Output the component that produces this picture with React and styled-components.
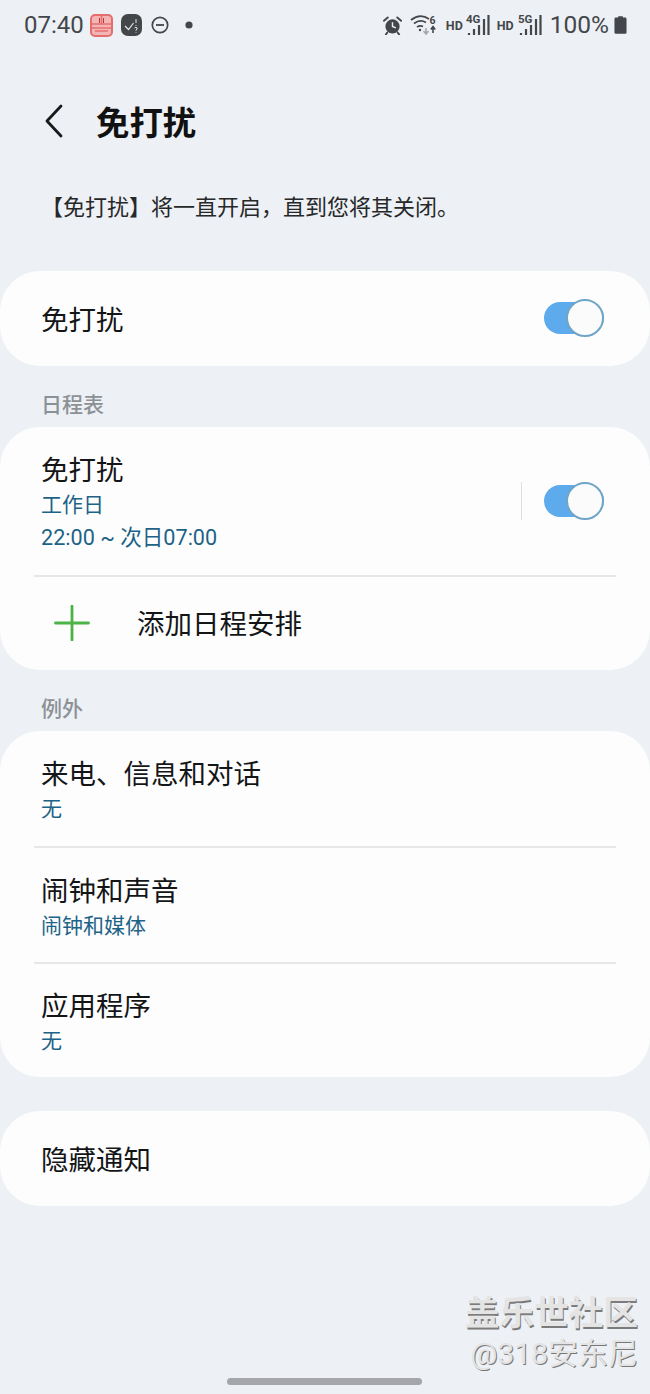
import React from "react";
import styled, { createGlobalStyle } from "styled-components";

const Global = createGlobalStyle`
  html, body { margin: 0; padding: 0; background: #edf0f4; }
  body { font-family: "Noto Sans CJK SC", "Roboto", sans-serif; }
`;

const Page = styled.div`
  position: relative;
  width: 650px;
  height: 1394px;
  overflow: hidden;
  background: #edf0f4;
  display: flex;
  flex-direction: column;
`;

const StatusBar = styled.div`
  height: 50px;
  display: flex;
  align-items: center;
  justify-content: space-between;
  padding: 0 23px 0 24px;
  color: #43474b;
  font-family: Roboto, sans-serif;
`;

const StatusGroup = styled.div`
  display: flex;
  align-items: center;
`;

const Slot = styled.span`
  display: flex;
  margin-left: ${({ $ml }) => $ml || 0}px;
`;

const StatusText = styled.span`
  font-size: ${({ $size }) => $size || 24}px;
  line-height: 30px;
  margin-left: ${({ $ml }) => $ml || 0}px;
`;

const Header = styled.header`
  height: 142px;
  display: flex;
  align-items: center;
  padding-left: 44px;
`;

const Title = styled.h1`
  margin: 0 0 0 32px;
  font-size: 33.4px;
  line-height: 44px;
  font-weight: 700;
  color: #111;
`;

const Intro = styled.p`
  margin: 0;
  height: 79px;
  box-sizing: border-box;
  padding-left: 41px;
  font-size: 22px;
  line-height: 26px;
  color: #26282a;
`;

const Card = styled.section`
  background: #fdfdfd;
  border-radius: 40px;
  display: flex;
  flex-direction: column;
  margin-top: ${({ $mt }) => $mt || 0}px;
`;

const Row = styled.div`
  height: ${({ $h }) => $h}px;
  box-sizing: border-box;
  display: flex;
  align-items: center;
  padding: 0 46px ${({ $pb }) => $pb || 0}px 41px;
`;

const Divider = styled.div`
  height: 2px;
  margin: 0 34px;
  background: #e6e7e9;
`;

const RowBody = styled.div`
  flex: 1;
  display: flex;
  flex-direction: column;
`;

const Label = styled.div`
  font-size: 27.5px;
  line-height: 38px;
  color: #141517;
`;

const Sub = styled.div`
  font-size: 21px;
  line-height: 33px;
  color: #1c6387;
`;

const Time = styled(Sub)`
  font-family: Roboto, "Noto Sans CJK SC", sans-serif;
  font-size: 21.6px;
  margin-top: 1px;
`;

const SectionLabel = styled.div`
  height: 61px;
  box-sizing: border-box;
  padding: 19px 0 0 41px;
  font-size: 21px;
  line-height: 36px;
  font-weight: 500;
  color: #8c9196;
`;

const Toggle = styled.div`
  position: relative;
  width: 60px;
  height: 32px;
  background: #5dabec;
  border-radius: 16px;
`;

const Thumb = styled.div`
  position: absolute;
  right: 0;
  top: -3px;
  width: 38px;
  height: 38px;
  box-sizing: border-box;
  border-radius: 50%;
  background: #fbfbfb;
  border: 2px solid #6fa5c6;
`;

const VRule = styled.div`
  width: 1px;
  height: 38px;
  background: #dcdee0;
  margin-right: 22px;
`;

const PlusSlot = styled.div`
  display: flex;
  margin: -2px 0 0 13px;
`;

const AddLabel = styled(Label)`
  margin: -3px 0 0 47px;
`;

const Watermark = styled.div`
  position: absolute;
  right: 12px;
  top: 1288px;
  text-align: right;
  color: #e4e4e4;
`;

const WmTitle = styled.div`
  font-size: 34.6px;
  line-height: 44px;
  font-weight: 700;
  text-shadow: 1px 2px 0 #7b7b7b;
`;

const WmSub = styled.div`
  font-size: 30px;
  line-height: 44px;
  font-family: Roboto, "Noto Sans CJK SC", sans-serif;
  text-shadow: 1px 1px 0 #777;
`;

const HomeBar = styled.div`
  position: absolute;
  left: 227px;
  top: 1378px;
  width: 195px;
  height: 7px;
  border-radius: 4px;
  background: #a4a6a9;
`;

const HdText = styled.span`
  font-size: 12.5px;
  font-weight: 700;
  margin-left: ${({ $ml }) => $ml || 0}px;
  margin-top: 1px;
`;

const SwitchOn = () => (
  <Toggle>
    <Thumb />
  </Toggle>
);

const Chevron = () => (
  <svg width="20" height="34" viewBox="0 0 20 34">
    <path d="M17 2 L3 17 L17 32" fill="none" stroke="#1a1a1a" strokeWidth="2.8" strokeLinecap="round" strokeLinejoin="round" />
  </svg>
);

const Plus = () => (
  <svg width="36" height="36" viewBox="0 0 36 36">
    <path d="M1.5 18 H34.5 M18 1 V35" stroke="#4cb447" strokeWidth="2.8" strokeLinecap="round" />
  </svg>
);

const NoteIcon = () => (
  <svg width="23" height="23" viewBox="0 0 23 23">
    <rect x="1" y="1" width="21" height="21" rx="4" fill="#f3b4b4" stroke="#e66d6d" strokeWidth="2" />
    <path d="M2 10 H21 M11.5 2 V10 M2 14 H21 M5 17 H18" stroke="#e66d6d" strokeWidth="1.5" />
    <path d="M9.5 4 V9 M13.5 4 V9" stroke="#b33" strokeWidth="1" />
  </svg>
);

const CheckIcon = () => (
  <svg width="21" height="22" viewBox="0 0 21 22">
    <rect width="21" height="22" rx="7" fill="#43474a" />
    <path d="M4 12 L7.5 15.5 L12.5 9" fill="none" stroke="#e6e6e6" strokeWidth="1.2" />
    <path d="M15 5 V9 M15 11 V11.8 M13.5 14 Q15 12.5 16.2 14 Q16.2 15.3 15 16 V16.8 M15 18 V18.6" fill="none" stroke="#e6e6e6" strokeWidth="1" />
  </svg>
);

const DndIcon = () => (
  <svg width="18" height="18" viewBox="0 0 18 18">
    <circle cx="9" cy="9" r="7.7" fill="none" stroke="#43474b" strokeWidth="1.7" />
    <path d="M5 9 H13" stroke="#43474b" strokeWidth="1.8" />
  </svg>
);

const Dot = () => (
  <svg width="8" height="8" viewBox="0 0 8 8">
    <circle cx="4" cy="4" r="3.6" fill="#43474b" />
  </svg>
);

const AlarmIcon = () => (
  <svg width="19" height="19" viewBox="0 0 20 20">
    <circle cx="10" cy="11" r="7.5" fill="#43474b" />
    <path d="M10 6.5 V11 L13.5 12.5" fill="none" stroke="#edf0f4" strokeWidth="1.5" />
    <path d="M1 5 L5 1.5 M19 5 L15 1.5 M4.5 17.5 L3 19.5 M15.5 17.5 L17 19.5" stroke="#43474b" strokeWidth="2" strokeLinecap="round" />
  </svg>
);

const WifiIcon = () => (
  <svg width="27" height="22" viewBox="0 0 27 22">
    <path d="M1 6 Q10 -1 19 5 M4 9.5 Q10 5 16 8.5 M7 13 Q10 11 13 12.5" fill="none" stroke="#43474b" strokeWidth="1.7" />
    <circle cx="10" cy="16" r="1.2" fill="#43474b" />
    <path d="M16 14 V19 M13.5 17 L16 20 L18.5 17" fill="none" stroke="#a6a9ac" strokeWidth="1.6" />
    <path d="M23 13 V19 M20.8 15.5 L23 12.5 L25.2 15.5" fill="none" stroke="#43474b" strokeWidth="1.6" />
    <text x="19.5" y="9.5" fontSize="10.5" fontWeight="700" fontFamily="Roboto" fill="#43474b">6</text>
  </svg>
);

const SignalIcon = ({ label }) => (
  <svg width="24" height="24" viewBox="0 0 24 24">
    <text x="0" y="10" fontSize="11.5" fontWeight="700" fontFamily="Roboto" fill="#43474b">{label}</text>
    <path d="M3 22 V20 M8 22 V16 M13 22 V12 M18 22 V6 M22.5 22 V2" stroke="#43474b" strokeWidth="2.2" />
  </svg>
);

const BatteryIcon = () => (
  <svg width="13" height="20" viewBox="0 0 14 20">
    <path d="M4.5 0.5 H9.5 V2 H12 Q13.5 2 13.5 3.5 V18 Q13.5 19.5 12 19.5 H2 Q0.5 19.5 0.5 18 V3.5 Q0.5 2 2 2 H4.5 Z" fill="#43474b" />
  </svg>
);

export default function App() {
  return (
    <Page>
      <Global />
      <StatusBar>
        <StatusGroup>
          <StatusText>07:40</StatusText>
          <Slot $ml={6}><NoteIcon /></Slot>
          <Slot $ml={8}><CheckIcon /></Slot>
          <Slot $ml={9}><DndIcon /></Slot>
          <Slot $ml={16}><Dot /></Slot>
        </StatusGroup>
        <StatusGroup>
          <AlarmIcon />
          <Slot $ml={8}><WifiIcon /></Slot>
          <HdText $ml={9}>HD</HdText>
          <Slot $ml={3}><SignalIcon label="4G" /></Slot>
          <HdText $ml={7}>HD</HdText>
          <Slot $ml={4}><SignalIcon label="5G" /></Slot>
          <StatusText $size={24.5} $ml={8}>100%</StatusText>
          <Slot $ml={5}><BatteryIcon /></Slot>
        </StatusGroup>
      </StatusBar>

      <Header>
        <Chevron />
        <Title>免打扰</Title>
      </Header>

      <Intro>【免打扰】将一直开启，直到您将其关闭。</Intro>

      <Card>
        <Row $h={95} $pb={1}>
          <RowBody>
            <Label>免打扰</Label>
          </RowBody>
          <SwitchOn />
        </Row>
      </Card>

      <SectionLabel>日程表</SectionLabel>
      <Card>
        <Row $h={148}>
          <RowBody>
            <Label>免打扰</Label>
            <Sub>工作日</Sub>
            <Time>22:00 ~ 次日07:00</Time>
          </RowBody>
          <VRule />
          <SwitchOn />
        </Row>
        <Divider />
        <Row $h={93}>
          <PlusSlot><Plus /></PlusSlot>
          <AddLabel>添加日程安排</AddLabel>
        </Row>
      </Card>

      <SectionLabel>例外</SectionLabel>
      <Card>
        <Row $h={115}>
          <RowBody>
            <Label>来电、信息和对话</Label>
            <Sub>无</Sub>
          </RowBody>
        </Row>
        <Divider />
        <Row $h={114}>
          <RowBody>
            <Label>闹钟和声音</Label>
            <Sub>闹钟和媒体</Sub>
          </RowBody>
        </Row>
        <Divider />
        <Row $h={113}>
          <RowBody>
            <Label>应用程序</Label>
            <Sub>无</Sub>
          </RowBody>
        </Row>
      </Card>

      <Card $mt={34}>
        <Row $h={95} $pb={1}>
          <RowBody>
            <Label>隐藏通知</Label>
          </RowBody>
        </Row>
      </Card>

      <Watermark>
        <WmTitle>盖乐世社区</WmTitle>
        <WmSub>@318安东尼</WmSub>
      </Watermark>
      <HomeBar />
    </Page>
  );
}
